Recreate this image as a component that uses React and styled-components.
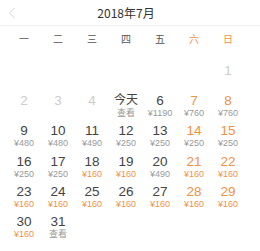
import React from 'react';
import styled, { createGlobalStyle } from 'styled-components';

const GlobalStyle = createGlobalStyle`
  html, body {
    margin: 0;
    padding: 0;
    background: #fff;
  }
  body {
    font-family: "Noto Sans CJK SC", "Noto Sans", sans-serif;
    color: #333;
  }
`;

const ORANGE = '#f3913f';

const Calendar = styled.div`
  width: 260px;
  height: 251px;
  overflow: hidden;
`;

const Header = styled.div`
  display: grid;
  grid-template-columns: 1fr auto 1fr;
  align-items: center;
  height: 25px;
  padding: 0 15px 0 7px;
  border-bottom: 1px solid #efefef;
`;

const Arrow = styled.svg`
  width: 8px;
  height: 12px;
  margin-left: 1px;
`;

const Title = styled.div`
  font-size: 12px;
  color: #333;
  line-height: 25px;
`;

const Week = styled.div`
  display: grid;
  grid-template-columns: repeat(7, 34px);
  padding: 0 15px 0 7px;
  height: 24px;
  align-items: center;
`;

const WeekDay = styled.div`
  text-align: center;
  font-size: 10px;
  color: ${(p) => (p.$weekend ? ORANGE : '#555')};
`;

const Days = styled.div`
  display: grid;
  grid-template-columns: repeat(7, 34px);
  grid-auto-rows: 30.4px;
  padding: 12.5px 15px 0 7px;
  font-family: "Liberation Sans", "Noto Sans CJK SC", sans-serif;
`;

const Cell = styled.div`
  display: flex;
  flex-direction: column;
  align-items: center;
`;

const Num = styled.div`
  font-size: ${(p) => (p.$today ? '12px' : '13.5px')};
  line-height: 15px;
  color: ${(p) => (p.$muted ? '#ccc' : p.$weekend ? ORANGE : '#444')};
`;

const Price = styled.div`
  font-size: 9px;
  line-height: 11px;
  color: ${(p) => (p.$hot ? ORANGE : '#999')};
`;

const weekdays = ['一', '二', '三', '四', '五', '六', '日'];

const prices = {
  6: '¥1190', 7: '¥760', 8: '¥760',
  9: '¥480', 10: '¥480', 11: '¥490', 12: '¥250', 13: '¥250', 14: '¥250', 15: '¥250',
  16: '¥250', 17: '¥250', 18: '¥160', 19: '¥160', 20: '¥490', 21: '¥160', 22: '¥160',
  23: '¥160', 24: '¥160', 25: '¥160', 26: '¥160', 27: '¥160', 28: '¥160', 29: '¥160',
  30: '¥160',
};

// July 2018 starts on a Sunday
const cells = [];
for (let i = 0; i < 6; i++) cells.push(null);
for (let d = 1; d <= 31; d++) cells.push(d);

const renderDay = (d, i) => {
  if (d === null) return <Cell key={i} />;
  const weekend = i % 7 >= 5;
  if (d <= 4) {
    return (
      <Cell key={i}>
        <Num $muted>{d}</Num>
      </Cell>
    );
  }
  if (d === 5) {
    return (
      <Cell key={i}>
        <Num $today>今天</Num>
        <Price>查看</Price>
      </Cell>
    );
  }
  if (d === 31) {
    return (
      <Cell key={i}>
        <Num>{d}</Num>
        <Price>查看</Price>
      </Cell>
    );
  }
  const p = prices[d];
  return (
    <Cell key={i}>
      <Num $weekend={weekend}>{d}</Num>
      <Price $hot={p === '¥160'}>{p}</Price>
    </Cell>
  );
};

export default function App() {
  return (
    <>
      <GlobalStyle />
      <Calendar>
        <Header>
          <Arrow viewBox="0 0 8 12">
            <path d="M6.5 1 L1.5 6 L6.5 11" fill="none" stroke="#d6d6d6" strokeWidth="1" />
          </Arrow>
          <Title>2018年7月</Title>
          <span />
        </Header>
        <Week>
          {weekdays.map((w, i) => (
            <WeekDay key={w} $weekend={i >= 5}>{w}</WeekDay>
          ))}
        </Week>
        <Days>{cells.map(renderDay)}</Days>
      </Calendar>
    </>
  );
}
